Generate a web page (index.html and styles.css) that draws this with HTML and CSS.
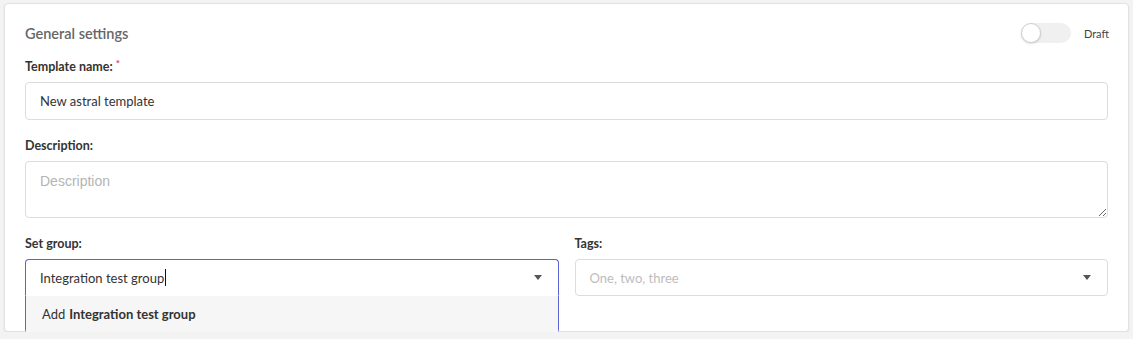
FILE: index.html
```html
<!DOCTYPE html>
<html lang="en">
<head>
    <meta charset="UTF-8">
    <title>General settings</title>
    <link rel="stylesheet" href="styles.css">
</head>
<body>
<div class="card">
    <div class="card-header">
        <h2 class="card-title">General settings</h2>
        <div class="status">
            <span class="toggle"><span class="knob"></span></span>
            <span class="status-label">Draft</span>
        </div>
    </div>

    <div class="field">
        <label class="field-label">Template name: <span class="required">*</span></label>
        <div class="input">New astral template</div>
    </div>

    <div class="field">
        <label class="field-label">Description:</label>
        <textarea class="textarea" placeholder="Description"></textarea>
    </div>

    <div class="field-row">
        <div class="field">
            <label class="field-label">Set group:</label>
            <div class="select select-open">
                <span class="select-value">Integration test group<span class="caret"></span></span>
                <span class="arrow"></span>
                <div class="menu">
                    <div class="menu-item">Add <b>Integration test group</b></div>
                </div>
            </div>
        </div>
        <div class="field">
            <label class="field-label">Tags:</label>
            <div class="select">
                <span class="select-placeholder">One, two, three</span>
                <span class="arrow"></span>
            </div>
        </div>
    </div>
</div>
</body>
</html>
```

FILE: styles.css
```css
/* Farben */
:root {
    --page-bg: #f3f3f3;
    --border: #dcdcdc;
    --label: #333;
    --muted: #bdbdbd;
    --accent: #5a64d2;
}

body {
    margin: 0;
    padding: 3px 4px 0;
    background: var(--page-bg);
    font-family: Lato, sans-serif;
    color: #333;
}

.card {
    background: #fff;
    border: 1px solid #e2e2e2;
    border-radius: 4px;
    padding: 19px 20px 35px;
    box-shadow: 0 1px 2px rgba(0, 0, 0, 0.08);
}

.card-header {
    display: flex;
    align-items: center;
    justify-content: space-between;
    height: 20px;
    margin-bottom: 16px;
}

.card-title {
    margin: 0;
    font-size: 14.5px;
    font-weight: 600;
    color: #666;
}

.status {
    display: flex;
    align-items: center;
    gap: 13px;
    margin-right: -1px;
}

.toggle {
    display: block;
    width: 50px;
    height: 20px;
    border-radius: 10px;
    background: #f0f0f0;
    position: relative;
}

.knob {
    position: absolute;
    left: 0;
    top: 0;
    width: 18px;
    height: 18px;
    border-radius: 50%;
    background: #fff;
    border: 1px solid #d0d0d0;
    box-shadow: 0 1px 2px rgba(0, 0, 0, 0.15);
}

.status-label {
    font-size: 11px;
    color: #444;
}

.field {
    margin-bottom: 18px;
}

.field-label {
    display: block;
    height: 16px;
    font-size: 12.5px;
    font-weight: 700;
    line-height: 16px;
    color: var(--label);
    margin-bottom: 7px;
}

.required {
    color: #d0406a;
    font-size: 10px;
    line-height: 0;
    position: relative;
    top: -4px;
}

.input {
    height: 36px;
    border: 1px solid var(--border);
    border-radius: 4px;
    padding: 0 14px;
    display: flex;
    align-items: center;
    font-size: 13px;
}

.textarea {
    display: block;
    box-sizing: border-box;
    width: 100%;
    height: 57px;
    margin: 0;
    border: 1px solid var(--border);
    border-radius: 4px;
    padding: 11px 14px;
    font-family: "Liberation Sans", Arial, sans-serif;
    font-size: 14px;
    resize: vertical;
}

.textarea::placeholder {
    color: #b5b5b5;
}

.field-row {
    display: grid;
    grid-template-columns: 1fr 1fr;
    gap: 16px;
}

.field-row .field {
    margin-bottom: 0;
}

.select {
    position: relative;
    height: 35px;
    border: 1px solid var(--border);
    border-radius: 4px;
    padding: 0 14px;
    display: flex;
    align-items: center;
    justify-content: space-between;
    font-size: 13px;
}

.select-open {
    border-color: var(--accent);
    border-bottom-left-radius: 0;
    border-bottom-right-radius: 0;
    border-bottom-color: transparent;
}

.select-value {
    display: flex;
    align-items: center;
}

.caret {
    display: inline-block;
    width: 1px;
    height: 17px;
    background: #111;
    margin-left: 1px;
}

.select-placeholder {
    color: var(--muted);
}

.arrow {
    width: 0;
    height: 0;
    border-left: 4px solid transparent;
    border-right: 4px solid transparent;
    border-top: 5px solid #555;
    margin-right: 2px;
}

.menu {
    position: absolute;
    left: -1px;
    right: -1px;
    top: 36px;
    border: 1px solid var(--accent);
    border-top: none;
    border-radius: 0 0 4px 4px;
    background: #fff;
    z-index: 2;
}

.menu-item {
    background: #f6f6f6;
    height: 36px;
    padding: 0 16px;
    display: flex;
    align-items: center;
    gap: 4px;
    font-size: 13px;
    color: #333;
}
```
